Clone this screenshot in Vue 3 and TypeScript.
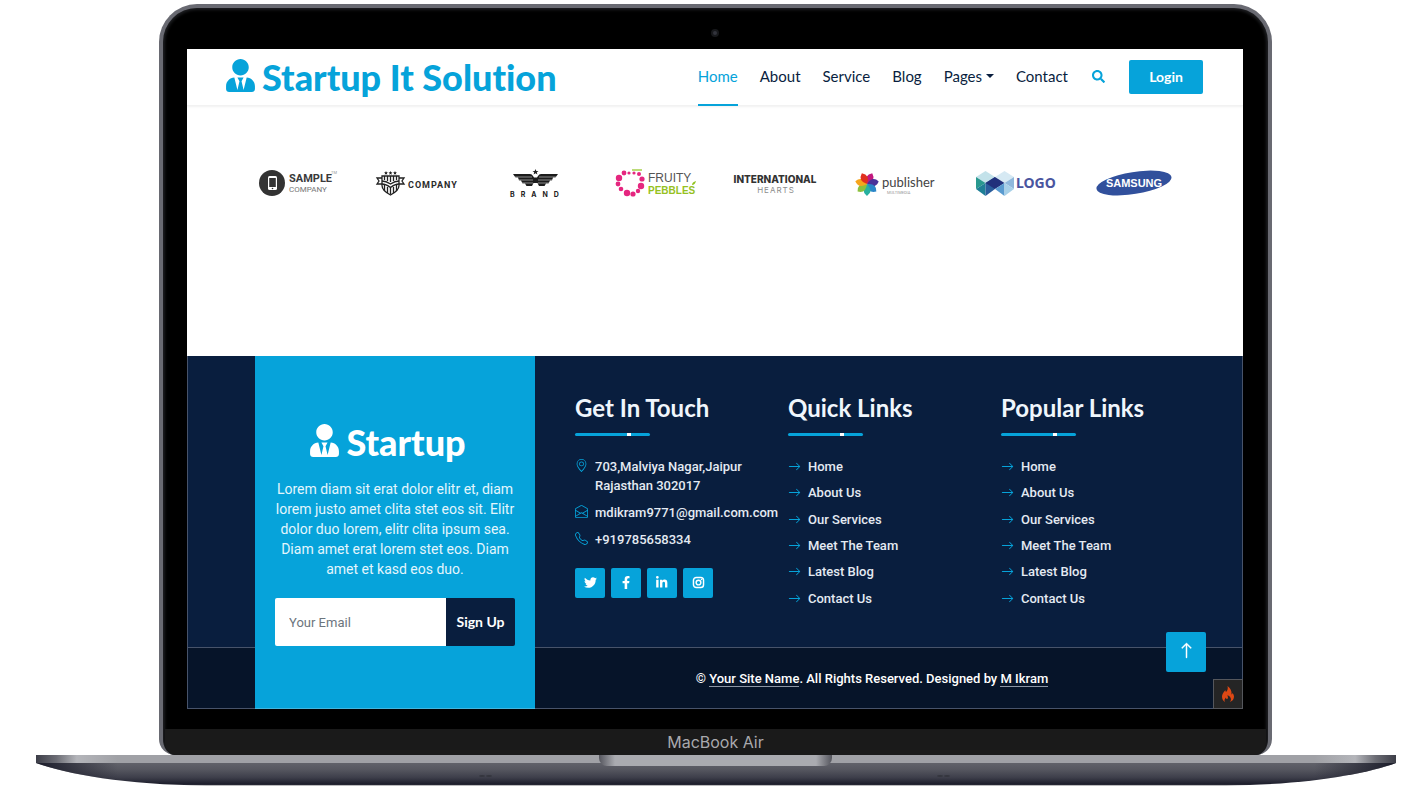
<script setup lang="ts">
import { ref } from 'vue'

interface NavItem {
  label: string
  active?: boolean
  menu?: boolean
}

const navItems: NavItem[] = [
  { label: 'Home', active: true },
  { label: 'About' },
  { label: 'Service' },
  { label: 'Blog' },
  { label: 'Pages', menu: true },
  { label: 'Contact' },
]

const links: string[] = ['Home', 'About Us', 'Our Services', 'Meet The Team', 'Latest Blog', 'Contact Us']
const linkColumns: string[] = ['Quick Links', 'Popular Links']
const email = ref('')

const userTie =
  'M224 256c70.7 0 128-57.3 128-128S294.7 0 224 0 96 57.3 96 128s57.3 128 128 128zm95.8 32.6L272 480l-32-136 32-56h-96l32 56-32 136-47.8-191.4C56.9 292 0 350.3 0 422.4V464c0 26.5 21.5 48 48 48h352c26.5 0 48-21.5 48-48v-41.6c0-72.1-56.9-130.4-128.2-133.8z'
const arrowRight =
  'M1 8a.5.5 0 0 1 .5-.5h11.793l-3.147-3.146a.5.5 0 0 1 .708-.708l4 4a.5.5 0 0 1 0 .708l-4 4a.5.5 0 0 1-.708-.708L13.293 8.5H1.5A.5.5 0 0 1 1 8z'

interface Dot {
  x: number
  y: number
  r: number
}
const pebbles: Dot[] = [
  { x: 10, y: 6, r: 2.4 },
  { x: 15, y: 6, r: 1.6 },
  { x: 20, y: 6, r: 1.6 },
  { x: 25, y: 7, r: 2 },
  { x: 28, y: 12, r: 2.6 },
  { x: 27, y: 19, r: 3.2 },
  { x: 24, y: 24, r: 2.2 },
  { x: 19, y: 27, r: 2.6 },
  { x: 13, y: 26, r: 3.2 },
  { x: 7, y: 22, r: 2.3 },
  { x: 4, y: 17, r: 2.4 },
  { x: 5, y: 11, r: 3.2 },
]
const petals: string[] = ['#c2187e', '#4a3299', '#2a86c8', '#27b0a0', '#8cc03c', '#f6a51c', '#e0301e']
</script>

<template>
  <div class="page">
    <div class="lid">
      <span class="camera"></span>
      <div class="screen">
        <header class="topbar">
          <a class="brand" href="#">
            <svg class="brand-icon" viewBox="0 0 448 512" aria-hidden="true"><path :d="userTie" /></svg>
            <span>Startup It Solution</span>
          </a>
          <nav class="nav">
            <a v-for="item in navItems" :key="item.label" href="#" class="nav-link" :class="{ active: item.active }">
              {{ item.label }}<i v-if="item.menu" class="caret"></i>
            </a>
          </nav>
          <button class="search" type="button" aria-label="Search">
            <svg viewBox="0 0 512 512"><path d="M505 442.7L405.3 343c-4.5-4.5-10.6-7-17-7H372c27.6-35.3 44-79.7 44-128C416 93.1 322.9 0 208 0S0 93.1 0 208s93.1 208 208 208c48.3 0 92.7-16.4 128-44v16.3c0 6.4 2.5 12.5 7 17l99.7 99.7c9.4 9.4 24.6 9.4 33.9 0l28.3-28.3c9.4-9.4 9.4-24.6.1-34zM208 336c-70.7 0-128-57.2-128-128 0-70.7 57.2-128 128-128 70.7 0 128 57.2 128 128 0 70.7-57.2 128-128 128z" /></svg>
          </button>
          <button class="login" type="button">Login</button>
        </header>

        <section class="vendors">
          <svg class="vendor" viewBox="0 0 84 32">
            <circle cx="17" cy="16" r="13" fill="#333" />
            <rect x="13" y="9" width="9" height="14" rx="1.5" fill="#fff" />
            <rect x="14.2" y="11" width="6.6" height="9" fill="#333" />
            <circle cx="17.5" cy="21.5" r=".8" fill="#333" />
            <text x="34" y="15" class="t-sample">SAMPLE</text>
            <text x="34" y="25" class="t-sample-sub">COMPANY</text>
            <text x="76" y="7" class="t-tm">TM</text>
          </svg>
          <svg class="vendor" viewBox="0 0 84 32">
            <g fill="none" stroke="#222" stroke-width="1.3">
              <path d="M8 9h17v9.500q0 5-8.500 9.500Q8 23.500 8 18.500z" />
              <path d="M10.500 9v4M13.500 9v5M16.500 9v6M19.500 9v5M22.500 9v4" />
              <path d="M10.500 18v6M13.500 20v6M16.500 21v6M19.500 20v6M22.500 18v6" />
              <path d="M8 11H3l2 3-2 3h5M25 11h5l-2 3 2 3h-5" />
              <path d="M8 14q4 0 8.500 3 4.500-3 8.500-3M8 17q4 0 8.500 3.500 4.500-3.500 8.500-3.500" />
            </g>
            <g fill="#222">
              <path d="M12 4l.6 1.300 1.400.1-1.100.9.4 1.400-1.300-.8-1.300.8.4-1.400-1.100-.9 1.400-.1z" />
              <path d="M16.500 4l.6 1.300 1.400.1-1.100.9.4 1.400-1.300-.8-1.300.8.4-1.400-1.100-.9 1.400-.1z" />
              <path d="M21 4l.6 1.300 1.400.1-1.100.9.4 1.400-1.300-.8-1.300.8.4-1.400-1.100-.9 1.400-.1z" />
            </g>
            <text x="34" y="21" class="t-company">COMPANY</text>
          </svg>
          <svg class="vendor" viewBox="0 0 84 32">
            <path d="M41.500 2l.8 2h2.200l-1.700 1.300.6 2.100-1.900-1.200-1.900 1.200.6-2.100L38.500 4h2.200z" fill="#222" />
            <path d="M19 7h17q2 0 3 2l1 1.500h3L44 9q1-2 3-2h17l-2.500 3.500H59l-1 3h-2l-1.500 3H52L50.500 19h-5.500l-1.500-3h-4L38 19h-5.500L31 16.500h-2.500l-1.500-3H25l-1-3h-2.500z" fill="#1c1c1c" />
            <path d="M21 10h17M45 10h17M24 13h15M44 13h15M28 16h11M44 16h11" stroke="#fff" stroke-width=".5" />
            <text x="16" y="30" class="t-brand">BRAND</text>
          </svg>
          <svg class="vendor" viewBox="0 0 84 32">
            <circle v-for="(d, i) in pebbles" :key="i" :cx="d.x" :cy="d.y" :r="d.r" fill="#e5267f" />
            <path d="M18 3h10" stroke="#8fc31f" stroke-width="1.200" fill="none" />
            <text x="34" y="15" class="t-fruity">FRUITY</text>
            <text x="34" y="27" class="t-pebbles">PEBBLES</text>
            <path d="M78 18q0-3 4-4-1 4-4 4z" fill="#8fc31f" />
          </svg>
          <svg class="vendor" viewBox="0 0 84 32">
            <text x="42" y="16" text-anchor="middle" class="t-inter">INTERNATIONAL</text>
            <text x="43" y="26" text-anchor="middle" class="t-hearts">HEARTS</text>
          </svg>
          <svg class="vendor" viewBox="0 0 84 32">
            <g transform="translate(14 17)">
              <path
                v-for="(c, i) in petals"
                :key="c"
                d="M0 0Q-7 -7 0 -12Q7 -7 0 0Z"
                :fill="c"
                :transform="`rotate(${(i * 360) / 7 + 26})`"
              />
            </g>
            <text x="29" y="20" class="t-pub">publisher</text>
            <text x="34" y="27" class="t-multi">MULTIMEDIA</text>
          </svg>
          <svg class="vendor" viewBox="0 0 84 32">
            <path d="M3 10l9.500-6 9.500 6-9.500 6z" fill="#c3e2ea" />
            <path d="M22 10l9.500-6 9.500 6-9.500 6z" fill="#d6e9f3" />
            <path d="M3 10l9.500 6L3 22z" fill="#29998f" />
            <path d="M41 10l-9.500 6 9.500 6z" fill="#8fb8dc" />
            <path d="M3 22l9.500-6v13z" fill="#1e7f96" />
            <path d="M12.500 16L22 10v12l-9.500 7z" fill="#2a5d9c" />
            <path d="M22 10l9.500 6-9.500 6-9.500-6z" fill="#21307c" />
            <path d="M22 22l9.500-6v13z" fill="#5a9bd0" />
            <path d="M31.500 16l9.500 6-9.500 7z" fill="#a7d0e8" />
            <text x="43" y="21" class="t-logo">LOGO</text>
          </svg>
          <svg class="vendor" viewBox="0 0 84 32">
            <ellipse cx="42" cy="16" rx="38" ry="11" transform="rotate(-9 42 16)" fill="#31509c" />
            <text x="42" y="20" text-anchor="middle" class="t-samsung">SAMSUNG</text>
          </svg>
        </section>

        <footer class="footer">
          <div class="footer-top">
            <section class="column">
              <h3>Get In Touch</h3>
              <div class="rule"></div>
              <ul class="contact">
                <li>
                  <svg viewBox="0 0 16 16"><path d="M12.166 8.940c-.524 1.062-1.234 2.120-1.960 3.070A31.493 31.493 0 0 1 8 14.580a31.481 31.481 0 0 1-2.206-2.570c-.726-.950-1.436-2.008-1.960-3.070C3.304 7.867 3 6.862 3 6a5 5 0 0 1 10 0c0 .862-.305 1.867-.834 2.940zM8 16s6-5.686 6-10A6 6 0 0 0 2 6c0 4.314 6 10 6 10z" /><path d="M8 8a2 2 0 1 1 0-4 2 2 0 0 1 0 4zm0 1a3 3 0 1 0 0-6 3 3 0 0 0 0 6z" /></svg>
                  <span>703,Malviya Nagar,Jaipur<br />Rajasthan 302017</span>
                </li>
                <li>
                  <svg viewBox="0 0 16 16"><path d="M8.470 1.318a1 1 0 0 0-.940 0l-6 3.200A1 1 0 0 0 1 5.400v.817l5.750 3.450L8 8.917l1.250.750L15 6.217V5.400a1 1 0 0 0-.530-.882l-6-3.200zM15 7.383l-4.778 2.867L15 13.117V7.383zm-.035 6.880L8 10.082l-6.965 4.180A1 1 0 0 0 2 15h12a1 1 0 0 0 .965-.738zM1 13.116l4.778-2.867L1 7.383v5.734zM7.059.435a2 2 0 0 1 1.882 0l6 3.200A2 2 0 0 1 16 5.400V14a2 2 0 0 1-2 2H2a2 2 0 0 1-2-2V5.400a2 2 0 0 1 1.059-1.765l6-3.200z" /></svg>
                  <span>mdikram9771@gmail.com.com</span>
                </li>
                <li>
                  <svg viewBox="0 0 16 16"><path d="M3.654 1.328a.678.678 0 0 0-1.015-.063L1.605 2.300c-.483.484-.661 1.169-.450 1.770a17.568 17.568 0 0 0 4.168 6.608 17.569 17.569 0 0 0 6.608 4.168c.601.211 1.286.033 1.770-.450l1.034-1.034a.678.678 0 0 0-.063-1.015l-2.307-1.794a.678.678 0 0 0-.580-.122l-2.190.547a1.745 1.745 0 0 1-1.657-.459L5.482 8.062a1.745 1.745 0 0 1-.460-1.657l.548-2.190a.678.678 0 0 0-.122-.580L3.654 1.328zM1.884.511a1.745 1.745 0 0 1 2.612.163L6.290 2.980c.329.423.445.974.315 1.494l-.547 2.190a.678.678 0 0 0 .178.643l2.457 2.457a.678.678 0 0 0 .644.178l2.189-.547a1.745 1.745 0 0 1 1.494.315l2.306 1.794c.829.645.905 1.870.163 2.611l-1.034 1.034c-.740.740-1.846 1.065-2.877.702a18.634 18.634 0 0 1-7.010-4.420 18.634 18.634 0 0 1-4.420-7.009c-.362-1.030-.037-2.137.703-2.877L1.885.511z" /></svg>
                  <span>+919785658334</span>
                </li>
              </ul>
              <div class="social">
                <a href="#" aria-label="Twitter"><svg viewBox="0 0 512 512"><path d="M459.370 151.716c.325 4.548.325 9.097.325 13.645 0 138.720-105.583 298.558-298.558 298.558-59.452 0-114.680-17.219-161.137-47.106 8.447.974 16.568 1.299 25.340 1.299 49.055 0 94.213-16.568 130.274-44.832-46.132-.975-84.792-31.188-98.112-72.772 6.498.974 12.995 1.624 19.818 1.624 9.421 0 18.843-1.300 27.614-3.573-48.081-9.747-84.143-51.980-84.143-102.985v-1.299c13.969 7.797 30.214 12.670 47.431 13.319-28.264-18.843-46.781-51.005-46.781-87.391 0-19.492 5.197-37.360 14.294-52.954 51.655 63.675 129.300 105.258 216.365 109.807-1.624-7.797-2.599-15.918-2.599-24.040 0-57.828 46.782-104.934 104.934-104.934 30.213 0 57.502 12.670 76.670 33.137 23.715-4.548 46.456-13.320 66.599-25.340-7.798 24.366-24.366 44.833-46.132 57.827 21.117-2.273 41.584-8.122 60.426-16.243-14.292 20.791-32.161 39.308-52.628 54.253z" /></svg></a>
                <a href="#" aria-label="Facebook"><svg viewBox="0 0 320 512"><path d="M279.140 288l14.220-92.660h-88.910v-60.130c0-25.350 12.420-50.060 52.240-50.060h40.420V6.260S260.430 0 225.360 0c-73.220 0-121.080 44.380-121.080 124.720v70.620H22.890V288h81.390v224h100.170V288z" /></svg></a>
                <a href="#" aria-label="LinkedIn"><svg viewBox="0 0 448 512"><path d="M100.280 448H7.400V148.900h92.880zM53.790 108.100C24.090 108.100 0 83.500 0 53.800a53.790 53.790 0 0 1 107.580 0c0 29.700-24.100 54.300-53.790 54.300zM447.900 448h-92.680V302.400c0-34.700-.7-79.200-48.290-79.200-48.290 0-55.690 37.700-55.690 76.700V448h-92.780V148.900h89.080v40.800h1.300c12.400-23.500 42.690-48.300 87.880-48.300 94 0 111.280 61.900 111.280 142.300V448z" /></svg></a>
                <a href="#" aria-label="Instagram"><svg viewBox="0 0 16 16"><g fill="none" stroke="#fff" stroke-width="1.800"><rect x="1.800" y="1.800" width="12.400" height="12.400" rx="3.500" /><circle cx="8" cy="8" r="2.900" /></g><circle cx="11.700" cy="4.400" r=".9" /></svg></a>
              </div>
            </section>
            <section v-for="title in linkColumns" :key="title" class="column">
              <h3>{{ title }}</h3>
              <div class="rule"></div>
              <ul class="links">
                <li v-for="link in links" :key="link">
                  <a href="#"><svg viewBox="0 0 16 16" aria-hidden="true"><path :d="arrowRight" /></svg>{{ link }}</a>
                </li>
              </ul>
            </section>
          </div>
          <div class="footer-bottom">
            <p>© <a href="#">Your Site Name</a>. All Rights Reserved. Designed by <a href="#">M Ikram</a></p>
          </div>
          <aside class="panel">
            <a class="brand light" href="#">
              <svg class="brand-icon" viewBox="0 0 448 512" aria-hidden="true"><path :d="userTie" /></svg>
              <span>Startup</span>
            </a>
            <p>
              Lorem diam sit erat dolor elitr et, diam<br />lorem justo amet clita stet eos sit. Elitr<br />dolor duo
              lorem, elitr clita ipsum sea.<br />Diam amet erat lorem stet eos. Diam<br />amet et kasd eos duo.
            </p>
            <form class="signup" @submit.prevent>
              <input v-model="email" type="email" placeholder="Your Email" aria-label="Your Email" />
              <button type="submit">Sign Up</button>
            </form>
          </aside>
        </footer>

        <a class="to-top" href="#" aria-label="Back to top">
          <svg viewBox="0 0 16 16"><path d="M8 15a.5.5 0 0 0 .5-.5V2.707l3.146 3.147a.5.5 0 0 0 .708-.708l-4-4a.5.5 0 0 0-.708 0l-4 4a.5.5 0 1 0 .708.708L7.500 2.707V14.500a.5.5 0 0 0 .5.5z" /></svg>
        </a>
        <button class="debug" type="button" aria-label="Debug toolbar">
          <svg viewBox="0 0 12 16"><path d="M5.500 0Q6.500 3.500 4 6Q3.200 4.800 3.500 4Q0 7.500 0 10.500Q0 14 3 16Q1.800 13.500 3.800 11.500Q4 13 5.200 13Q6.500 12 5.500 9Q8.800 10.500 9 13Q9 15 7.800 16Q12 14.500 12 10.500Q12 8.500 10.500 7Q10.300 8.200 9.500 8.500Q10 3 5.500 0Z" /></svg>
        </button>
      </div>
      <div class="chin">MacBook Air</div>
    </div>
    <div class="base">
      <svg class="base-shape" viewBox="0 0 1360 31" preserveAspectRatio="none" aria-hidden="true">
        <defs>
          <linearGradient id="body" x1="0" y1="0" x2="0" y2="1">
            <stop offset="0" stop-color="#61626a" />
            <stop offset=".3" stop-color="#55565f" />
            <stop offset=".65" stop-color="#3d3e4a" />
            <stop offset=".95" stop-color="#1b1c2a" />
            <stop offset="1" stop-color="#77777c" />
          </linearGradient>
          <linearGradient id="edge" x1="0" y1="0" x2="1" y2="0">
            <stop offset="0" stop-color="#3c3d47" />
            <stop offset=".015" stop-color="#6b6c74" />
            <stop offset=".03" stop-color="#b4b5ba" />
            <stop offset=".06" stop-color="#a0a1a6" />
            <stop offset=".94" stop-color="#a0a1a6" />
            <stop offset=".97" stop-color="#b4b5ba" />
            <stop offset=".985" stop-color="#6b6c74" />
            <stop offset="1" stop-color="#3c3d47" />
          </linearGradient>
          <linearGradient id="tips" x1="0" y1="0" x2="1" y2="0">
            <stop offset="0" stop-color="#1b1c2a" />
            <stop offset=".06" stop-color="#1b1c2a" stop-opacity="0" />
            <stop offset=".94" stop-color="#1b1c2a" stop-opacity="0" />
            <stop offset="1" stop-color="#1b1c2a" />
          </linearGradient>
        </defs>
        <path d="M0 8H1360C1330 19 1270 30 1190 30.500H170C90 30 30 19 0 8Z" fill="url(#body)" />
        <path d="M0 8H1360C1330 19 1270 30 1190 30.500H170C90 30 30 19 0 8Z" fill="url(#tips)" />
        <rect width="1360" height="8" fill="url(#edge)" />
        <g fill="#35363f">
          <ellipse cx="446" cy="21" rx="3" ry="1" />
          <ellipse cx="453" cy="21" rx="3" ry="1" />
          <ellipse cx="904" cy="21" rx="3" ry="1" />
          <ellipse cx="911" cy="21" rx="3" ry="1" />
        </g>
      </svg>
      <span class="notch"></span>
    </div>
  </div>
</template>

<style>
body {
  margin: 0;
  background: #fff;
}
</style>

<style scoped>
* {
  box-sizing: border-box;
}

.page {
  --blue: #06a3da;
  --navy: #091e3e;
  padding: 4px 26px 0 36px;
  font-family: Roboto, 'Open Sans', sans-serif;
  font-size: 13px;
  font-weight: 500;
}

a {
  color: inherit;
  text-decoration: none;
}

button {
  font: inherit;
  border: 0;
  padding: 0;
  cursor: pointer;
}

h3,
p,
ul {
  margin: 0;
  padding: 0;
}

ul {
  list-style: none;
}

.lid {
  position: relative;
  margin: 0 124px 0 123px;
  padding: 41px 25px 0 24px;
  border: 4px solid #696a72;
  border-bottom: 0;
  border-radius: 38px 38px 16px 16px;
  background: #000;
  box-shadow: inset 0 0 3px 2px #1d1e21;
}

.camera {
  position: absolute;
  top: 21px;
  left: calc(50% - 5px);
  width: 8px;
  height: 8px;
  border: 2px solid #17181b;
  border-radius: 50%;
  background: #33343c;
}

.screen {
  position: relative;
  overflow: hidden;
  background: #fff;
}

.topbar {
  display: flex;
  align-items: center;
  height: 57px;
  padding: 0 40px 0 39px;
  border-bottom: 1px solid #f2f2f2;
  box-shadow: 0 1px 2px #f1f1f1;
}

.brand {
  display: flex;
  align-items: center;
  gap: 7px;
  color: var(--blue);
  font-family: Lato, 'Open Sans', sans-serif;
  font-size: 36px;
  font-variant-ligatures: none;
  font-weight: 900;
  line-height: 40px;
  white-space: nowrap;
}

.brand-icon {
  width: 29px;
  height: 33px;
  margin-bottom: 3px;
  fill: currentColor;
}

.nav {
  display: flex;
  gap: 22px;
  height: 57px;
  margin-left: auto;
  font-family: Lato, 'Open Sans', sans-serif;
  font-size: 15px;
  font-weight: 400;
  color: var(--navy);
}

.nav-link {
  display: flex;
  align-items: center;
  padding-bottom: 2px;
}

.nav-link.active {
  color: var(--blue);
  box-shadow: inset 0 -2px var(--blue);
}

.caret {
  margin-left: 4px;
  border: 4px solid transparent;
  border-top-color: var(--navy);
  border-bottom: 0;
}

.search {
  width: 13px;
  height: 14px;
  margin: 0 24px 2px;
  background: none;
}

.search svg {
  display: block;
  width: 13px;
  height: 13px;
  fill: var(--blue);
}

.login {
  width: 74px;
  height: 34px;
  padding-bottom: 2px;
  border-radius: 2px;
  background: var(--blue);
  color: #fff;
  font-family: Lato, 'Open Sans', sans-serif;
  font-size: 14px;
  font-weight: 700;
}

.vendors {
  display: grid;
  grid-template-columns: repeat(8, 1fr);
  justify-items: center;
  height: 250px;
  padding: 61px 49px 0 50px;
}

.vendor {
  width: 84px;
  height: 32px;
  overflow: visible;
}

.t-sample { font: 700 11px Roboto, sans-serif; fill: #3a3a3a; }
.t-sample-sub { font: 400 8px Roboto, sans-serif; fill: #777; }
.t-tm { font: 400 4px Roboto, sans-serif; fill: #999; }
.t-company { font: 700 9px Roboto, sans-serif; letter-spacing: 1px; fill: #2a2a2a; }
.t-brand { font: 700 7px Inter, sans-serif; letter-spacing: 6px; fill: #222; }
.t-fruity { font: 400 12px 'Liberation Sans', sans-serif; fill: #555; }
.t-pebbles { font: 700 10px 'Liberation Sans', sans-serif; fill: #96c11f; }
.t-inter { font: 800 10px Inter, sans-serif; fill: #333; }
.t-hearts { font: 400 8px Inter, sans-serif; letter-spacing: 1px; fill: #8c8c8c; }
.t-pub { font: 400 13px Lato, sans-serif; fill: #444; }
.t-multi { font: 400 4px Roboto, sans-serif; fill: #999; }
.t-logo { font: 700 14px 'Noto Sans', sans-serif; fill: #4a559f; }
.t-samsung { font: 700 11px 'Liberation Sans', sans-serif; fill: #fff; }

.footer {
  display: grid;
  grid-template-columns: 68px 280px 1fr;
  grid-template-rows: 292px 61px;
  background: #061429;
  color: #e4eaf2;
}

.footer-top {
  grid-area: 1 / 1 / 2 / 4;
  display: grid;
  grid-template-columns: repeat(3, 1fr);
  padding: 37px 28px 0 387px;
  border: 1px solid #47536a;
  border-width: 0 1px 1px;
  background: var(--navy);
}

.footer-bottom {
  grid-area: 2 / 1 / 3 / 4;
  display: grid;
  place-items: center;
  padding: 0 55px 0 369px;
  border: 1px solid #47536a;
  border-top: 0;
  color: #fff;
}

.footer-bottom a {
  border-bottom: 1px solid #8c96a5;
}

.panel {
  grid-area: 1 / 2 / 3 / 3;
  display: flex;
  flex-direction: column;
  padding: 66px 20px 0;
  background: var(--blue);
  border-bottom: 1px solid #42b5de;
}

.brand.light {
  justify-content: center;
  color: #fff;
  padding-right: 14px;
}

.panel p {
  margin-top: 17px;
  color: #e3f6fd;
  font-size: 14px;
  font-weight: 400;
  line-height: 20px;
  text-align: center;
  white-space: nowrap;
}

.signup {
  display: flex;
  height: 48px;
  margin-top: 19px;
}

.signup input {
  flex: 1;
  min-width: 0;
  padding: 0 14px;
  border: 0;
  border-radius: 2px 0 0 2px;
  font: inherit;
  font-weight: 400;
  background: #fff;
}

.signup input::placeholder {
  color: #6c757d;
  opacity: 1;
}

.signup button {
  width: 69px;
  padding-bottom: 2px;
  border-radius: 0 2px 2px 0;
  background: var(--navy);
  color: #fff;
  font-family: Lato, 'Open Sans', sans-serif;
  font-size: 14px;
  font-weight: 700;
}

.column {
  min-width: 0;
}

.column h3 {
  color: #f0f6fc;
  font-family: Lato, 'Open Sans', sans-serif;
  font-size: 24px;
  font-weight: 700;
  line-height: 30px;
  white-space: nowrap;
}

.rule {
  width: 75px;
  height: 3px;
  margin: 10px 0 21px;
  border-radius: 2px;
  background: linear-gradient(90deg, var(--blue) 52px, #fff 52px 56px, var(--blue) 56px);
}

.contact {
  display: grid;
  gap: 8px;
  line-height: 19px;
}

.contact li {
  display: flex;
  gap: 7px;
  white-space: nowrap;
}

.contact svg {
  flex: none;
  width: 13px;
  height: 13px;
  margin-top: 2px;
  fill: var(--blue);
}

.social {
  display: flex;
  gap: 6px;
  margin-top: 19px;
}

.social a {
  display: grid;
  place-items: center;
  width: 30px;
  height: 30px;
  border-radius: 2px;
  background: var(--blue);
}

.social svg {
  height: 13px;
  margin-bottom: 2px;
  fill: #fff;
}

.links {
  display: grid;
  grid-template-rows: repeat(6, 1fr);
  height: 158px;
}

.links a {
  display: flex;
  align-items: center;
  gap: 7px;
  line-height: 19px;
}

.links svg {
  width: 13px;
  height: 13px;
  fill: var(--blue);
}

.to-top {
  position: absolute;
  right: 37px;
  bottom: 37px;
  display: grid;
  place-items: center;
  width: 40px;
  height: 40px;
  border-radius: 2px;
  background: var(--blue);
}

.to-top svg {
  width: 17px;
  height: 17px;
  margin-bottom: 4px;
  fill: #fff;
  stroke: #fff;
  stroke-width: .4;
}

.debug {
  position: absolute;
  right: 0;
  bottom: 0;
  display: grid;
  place-items: center;
  width: 30px;
  height: 30px;
  border: 1px solid #55575c;
  background: #252525;
}

.debug svg {
  width: 12px;
  height: 16px;
  fill: #dd4814;
}

.chin {
  margin: 20px -23px 0 -22px;
  height: 26px;
  border-radius: 0 0 12px 12px;
  background: #1a1a1a;
  color: #a9a9ad;
  font-family: Inter, sans-serif;
  font-size: 16px;
  font-weight: 400;
  line-height: 27px;
  text-align: center;
}

.base {
  position: relative;
}

.base-shape {
  display: block;
  width: 100%;
  height: 31px;
}

.notch {
  position: absolute;
  top: 0;
  left: calc(50% - 117px);
  width: 233px;
  height: 11px;
  border-radius: 0 0 8px 8px;
  background: linear-gradient(90deg, #55565e, #aaabb0 16px, #aaabb0 217px, #55565e);
}
</style>
